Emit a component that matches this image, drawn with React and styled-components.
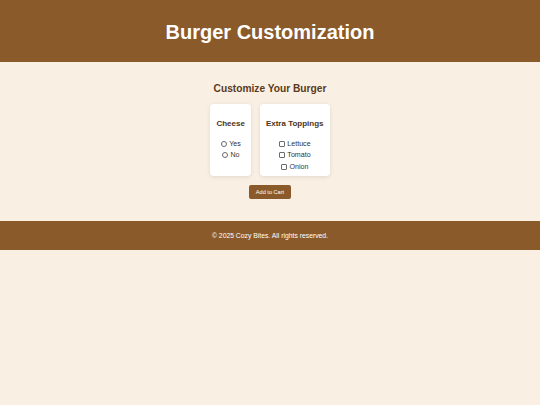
import React, { useState } from "react";
import styled, { createGlobalStyle } from "styled-components";

const GlobalStyle = createGlobalStyle`
  html, body {
    margin: 0;
    padding: 0;
    background: #f9f0e3;
    font-family: "Liberation Sans", Arial, sans-serif;
  }
`;

const cheeseOptions = ["Yes", "No"];
const toppings = ["Lettuce", "Tomato", "Onion"];

const App = () => {
  const [cheese, setCheese] = useState("");
  const [picked, setPicked] = useState([]);

  // 토핑 선택 토글
  const toggleTopping = (name) => {
    setPicked((state) =>
      state.includes(name) ? state.filter((v) => v !== name) : [...state, name]
    );
  };

  return (
    <Page>
      <GlobalStyle />
      <Header>
        <h1>Burger Customization</h1>
      </Header>
      <Main>
        <h2>Customize Your Burger</h2>
        <Cards>
          <Card>
            <h3>Cheese</h3>
            <OptionList>
              {cheeseOptions.map((v) => (
                <Option key={v}>
                  <Check
                    type="radio"
                    name="cheese"
                    $round
                    checked={cheese === v}
                    onChange={() => setCheese(v)}
                  />
                  {v}
                </Option>
              ))}
            </OptionList>
          </Card>
          <Card>
            <h3>Extra Toppings</h3>
            <OptionList>
              {toppings.map((v) => (
                <Option key={v}>
                  <Check
                    type="checkbox"
                    checked={picked.includes(v)}
                    onChange={() => toggleTopping(v)}
                  />
                  {v}
                </Option>
              ))}
            </OptionList>
          </Card>
        </Cards>
        <CartButton>Add to Cart</CartButton>
      </Main>
      <Footer>© 2025 Cozy Bites. All rights reserved.</Footer>
    </Page>
  );
};

export default App;

const Page = styled.div`
  width: 100%;
`;

const Header = styled.header`
  background: #8b5a2b;
  height: 62px;
  display: flex;
  align-items: center;
  justify-content: center;

  h1 {
    margin: 0;
    color: #ffffff;
    font-size: 20px;
    font-weight: 700;
    line-height: 23px;
    padding-top: 2px;
  }
`;

const Main = styled.main`
  display: flex;
  flex-direction: column;
  align-items: center;
  padding: 21px 0 22px;

  h2 {
    margin: 0 0 9px;
    color: #5a3a20;
    font-size: 10.2px;
    font-weight: 700;
    line-height: 12px;
  }
`;

const Cards = styled.div`
  display: flex;
  justify-content: center;
  gap: 9px;
`;

const Card = styled.div`
  background: #ffffff;
  border-radius: 4px;
  box-shadow: 0 1px 4px rgba(0, 0, 0, 0.1);
  padding: 10px 6px 3px;
  text-align: center;

  h3 {
    margin: 5px 0 10px;
    color: #4a3322;
    font-size: 8px;
    font-weight: 700;
    line-height: 9px;
  }
`;

const OptionList = styled.div`
  display: flex;
  flex-direction: column;
  align-items: center;
`;

const Option = styled.label`
  display: flex;
  align-items: center;
  height: 11.5px;
  font-size: 7.1px;
  color: #333333;
  gap: 2.5px;
`;

const Check = styled.input`
  appearance: none;
  box-sizing: border-box;
  width: 6px;
  height: 6px;
  margin: 0;
  border: 0.8px solid #6b6b6b;
  border-radius: ${(props) => (props.$round ? "50%" : "1px")};
  background: #ffffff;

  &:checked {
    background: #8b5a2b;
    border-color: #8b5a2b;
  }
`;

const CartButton = styled.button`
  margin-top: 9px;
  height: 14px;
  padding: 0 7px;
  border: none;
  border-radius: 2px;
  background: #8b5a2b;
  color: #ffffff;
  font-family: "Liberation Sans", Arial, sans-serif;
  font-size: 5.6px;
  cursor: pointer;
`;

const Footer = styled.footer`
  background: #8b5a2b;
  height: 29px;
  display: flex;
  align-items: center;
  justify-content: center;
  color: #ffffff;
  font-size: 6.8px;
`;
